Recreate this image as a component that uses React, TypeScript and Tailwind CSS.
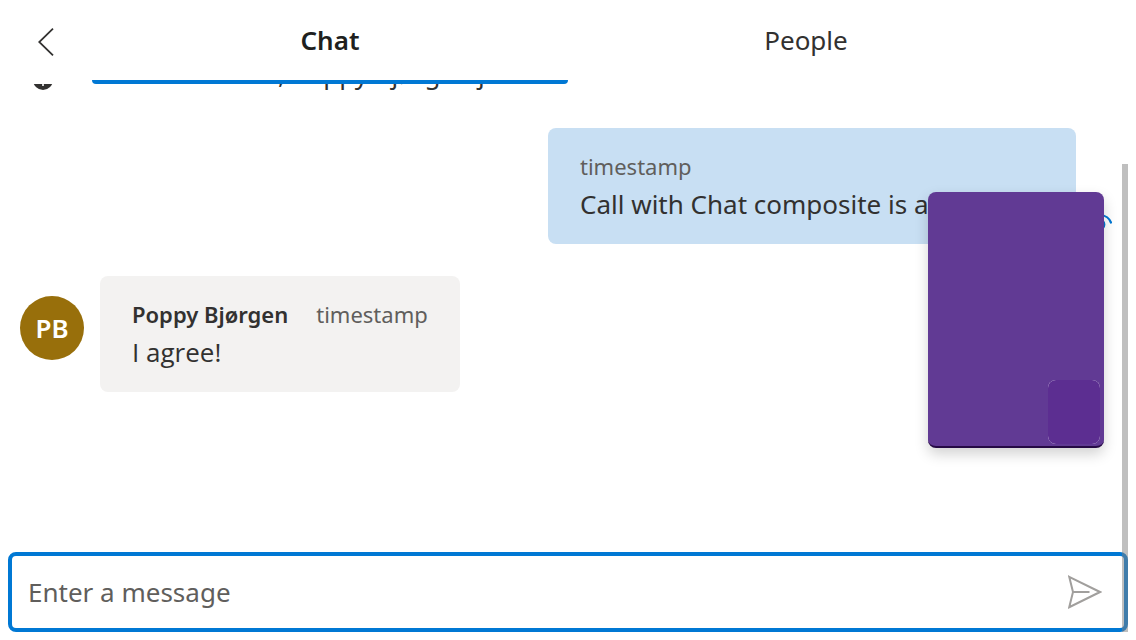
import { useState } from "react";

function BackIcon() {
  return (
    <svg viewBox="0 0 16 28" className="h-7 w-4" fill="none" stroke="#323130" strokeWidth="1.8">
      <path d="M15 .7 1.2 14 15 27.3" />
    </svg>
  );
}

function SendIcon() {
  return (
    <svg viewBox="0 0 34 34" className="h-[34px] w-[34px]" fill="none" stroke="#a19f9d" strokeWidth="2">
      <path d="M1.2 1.8 32 17 1.2 32.2 5 17ZM5 17H21.5" />
    </svg>
  );
}

function SendingIcon() {
  return (
    <svg viewBox="0 0 28 28" className="h-7 w-7" fill="none" stroke="#0078d4" strokeWidth="2.2">
      <path d="M16 3A12 12 0 0 1 27.3 11.4M4 15A12 12 0 0 1 8 6M16 27A12 12 0 0 1 7 23" />
      <circle cx="15.5" cy="12.5" r="4.8" />
    </svg>
  );
}

function JoinedIcon() {
  return (
    <svg viewBox="0 0 20 20" className="h-5 w-5">
      <circle cx="10" cy="10" r="10" fill="#323130" />
      <path d="M10 4v12M4.5 10h11" stroke="#fff" strokeWidth="1.6" />
    </svg>
  );
}

function Tab({ label, active, onSelect }: { label: string; active: boolean; onSelect: () => void }) {
  return (
    <button
      role="tab"
      aria-selected={active}
      onClick={onSelect}
      className={
        active
          ? "flex flex-1 flex-col text-[26px] leading-10 font-semibold text-[#201f1e]"
          : "flex flex-1 flex-col text-[26px] leading-10 text-[#323130]"
      }
    >
      <span className="flex w-full flex-1 items-center justify-center">{label}</span>
      <span className={active ? "h-1 w-full rounded-b bg-[#0078d4]" : "h-1 w-full"} />
    </button>
  );
}

export default function App() {
  const [tab, setTab] = useState("Chat");
  const [draft, setDraft] = useState("");

  return (
    <div className="relative flex h-screen flex-col bg-white font-['Noto_Sans','Open_Sans',sans-serif] text-[#323130]">
      <header className="flex h-21 shrink-0 pr-23">
        <button aria-label="Back" className="flex w-23 items-center justify-center">
          <BackIcon />
        </button>
        <div role="tablist" className="flex flex-1">
          {["Chat", "People"].map((name) => (
            <Tab key={name} label={name} active={tab === name} onSelect={() => setTab(name)} />
          ))}
        </div>
      </header>

      <main className="min-h-0 flex-1 overflow-hidden pr-6 pl-5">
        <div className="-mt-7.5 flex h-10 items-end gap-5 pl-[13px]">
          <div className="pb-1">
            <JoinedIcon />
          </div>
          <p className="text-[26px] leading-10">Dorian Gutmann, Poppy Bjørgen joined the chat.</p>
        </div>

        <div className="mt-8.5 flex items-center justify-end">
          <div className="w-132 rounded-lg bg-[#c8dff3] px-8 py-5">
            <p className="text-[22px] leading-9 text-[#605e5c]">timestamp</p>
            <p className="text-[26px] leading-10 whitespace-nowrap">Call with Chat composite is awesome!</p>
          </div>
          <div className="flex w-9 justify-end self-end pb-1">
            <SendingIcon />
          </div>
        </div>

        <div className="mt-8 flex gap-4">
          <div className="mt-5 flex h-16 w-16 shrink-0 items-center justify-center rounded-full bg-[#986f0b] text-[26px] font-semibold text-white">
            PB
          </div>
          <div className="w-90 rounded-lg bg-[#f3f2f1] px-8 py-5">
            <p className="flex gap-7 text-[22px] leading-9 whitespace-nowrap">
              <span className="font-semibold">Poppy Bjørgen</span>
              <span className="text-[#605e5c]">timestamp</span>
            </p>
            <p className="font-['Open_Sans','Noto_Sans',sans-serif] text-[26px] leading-10">I agree!</p>
          </div>
        </div>
      </main>

      <form
        onSubmit={(event) => event.preventDefault()}
        className="m-2 mt-0 flex h-20 shrink-0 items-center rounded-lg border-4 border-[#0078d4] bg-white pr-[22px] pl-4"
      >
        <input
          aria-label="Enter a message"
          placeholder="Enter a message"
          value={draft}
          onChange={(event) => setDraft(event.target.value)}
          className="min-w-0 flex-1 text-[26px] leading-10 outline-none placeholder:text-[#605e5c]"
        />
        <button type="submit" aria-label="Send message">
          <SendIcon />
        </button>
      </form>

      <div className="absolute top-48 right-8 flex h-64 w-44 items-end justify-end overflow-hidden rounded-lg border-b-2 border-[#260a45] bg-[#613a94] p-1 pb-0.5 shadow-[0_6px_14px_rgba(0,0,0,0.18)]">
        <div className="rounded-lg bg-white">
          <div className="h-16 w-13 rounded-lg bg-[#5c2e91]" />
        </div>
      </div>
      <div className="absolute top-41 right-2 bottom-2 w-1.5 bg-[#808080]/50" />
    </div>
  );
}
